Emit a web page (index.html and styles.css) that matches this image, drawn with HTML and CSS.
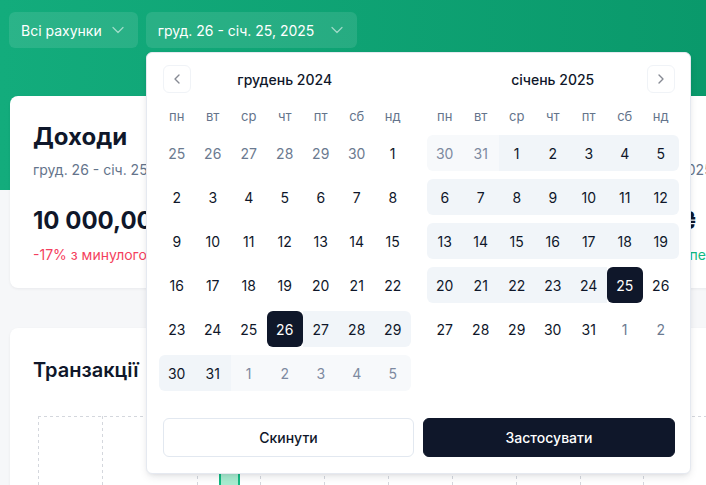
FILE: index.html
```html
<!DOCTYPE html>
<html lang="uk">
<head>
<meta charset="utf-8">
<title>Фінанси</title>
<link rel="stylesheet" href="styles.css">
</head>
<body>
<div class="page">
  <header class="toolbar">
    <button class="select">
      <span>Всі рахунки</span>
      <svg class="chev" viewBox="0 0 24 24"><path d="m6 9 6 6 6-6"/></svg>
    </button>
    <div class="date-wrap">
      <button class="select select-date">
        <span>груд. 26 - січ. 25, 2025</span>
        <svg class="chev" viewBox="0 0 24 24"><path d="m6 9 6 6 6-6"/></svg>
      </button>
      <div class="popover">
        <div class="months">
          <div class="month">
            <div class="month-head">
              <button class="nav"><svg viewBox="0 0 24 24"><path d="m15 18-6-6 6-6"/></svg></button>
              <span class="month-title">грудень 2024</span>
              <span></span>
            </div>
            <div class="weekdays"><span>пн</span><span>вт</span><span>ср</span><span>чт</span><span>пт</span><span>сб</span><span>нд</span></div>
            <div class="days">
              <span class="day out">25</span><span class="day out">26</span><span class="day out">27</span><span class="day out">28</span><span class="day out">29</span><span class="day out">30</span><span class="day">1</span>
              <span class="day">2</span><span class="day">3</span><span class="day">4</span><span class="day">5</span><span class="day">6</span><span class="day">7</span><span class="day">8</span>
              <span class="day">9</span><span class="day">10</span><span class="day">11</span><span class="day">12</span><span class="day">13</span><span class="day">14</span><span class="day">15</span>
              <span class="day">16</span><span class="day">17</span><span class="day">18</span><span class="day">19</span><span class="day">20</span><span class="day">21</span><span class="day">22</span>
              <span class="day">23</span><span class="day">24</span><span class="day">25</span><span class="day sel">26</span><span class="day range">27</span><span class="day range">28</span><span class="day range re">29</span>
              <span class="day range rs">30</span><span class="day range">31</span><span class="day range out">1</span><span class="day range out">2</span><span class="day range out">3</span><span class="day range out">4</span><span class="day range out re">5</span>
            </div>
          </div>
          <div class="month">
            <div class="month-head">
              <span></span>
              <span class="month-title">січень 2025</span>
              <button class="nav"><svg viewBox="0 0 24 24"><path d="m9 18 6-6-6-6"/></svg></button>
            </div>
            <div class="weekdays"><span>пн</span><span>вт</span><span>ср</span><span>чт</span><span>пт</span><span>сб</span><span>нд</span></div>
            <div class="days">
              <span class="day range out rs">30</span><span class="day range out">31</span><span class="day range">1</span><span class="day range">2</span><span class="day range">3</span><span class="day range">4</span><span class="day range re">5</span>
              <span class="day range rs">6</span><span class="day range">7</span><span class="day range">8</span><span class="day range">9</span><span class="day range">10</span><span class="day range">11</span><span class="day range re">12</span>
              <span class="day range rs">13</span><span class="day range">14</span><span class="day range">15</span><span class="day range">16</span><span class="day range">17</span><span class="day range">18</span><span class="day range re">19</span>
              <span class="day range rs">20</span><span class="day range">21</span><span class="day range">22</span><span class="day range">23</span><span class="day range">24</span><span class="day sel">25</span><span class="day">26</span>
              <span class="day">27</span><span class="day">28</span><span class="day">29</span><span class="day">30</span><span class="day">31</span><span class="day out">1</span><span class="day out">2</span>
            </div>
          </div>
        </div>
        <div class="actions">
          <button class="btn btn-outline">Скинути</button>
          <button class="btn btn-primary">Застосувати</button>
        </div>
      </div>
    </div>
  </header>

  <main class="content">
    <section class="stats">
      <div class="card stat stat-income">
        <h3 class="stat-title">Доходи</h3>
        <p class="stat-period">груд. 26 - січ. 25, 2025</p>
        <p class="stat-amount">10 000,00 ₴</p>
        <p class="stat-delta down">-17% з минулого періоду</p>
      </div>
      <div class="card stat stat-expense">
        <h3 class="stat-title">Витрати</h3>
        <p class="stat-period">груд. 26 - січ. 25, 2025</p>
        <p class="stat-amount">12 450,00 ₴</p>
        <p class="stat-delta up">+12,5% з минулого періоду</p>
      </div>
    </section>

    <section class="card chart-card">
      <h2 class="chart-title">Транзакції</h2>
      <svg class="chart" width="965" height="200" viewBox="0 0 965 200">
        <g class="grid">
          <line x1="0" y1="0.5" x2="965" y2="0.5"/>
          <line x1="0.5" y1="0" x2="0.5" y2="200"/>
          <line x1="64.5" y1="0" x2="64.5" y2="200"/>
          <line x1="159.5" y1="0" x2="159.5" y2="200"/>
          <line x1="222.5" y1="0" x2="222.5" y2="200"/>
          <line x1="286.5" y1="0" x2="286.5" y2="200"/>
          <line x1="350.5" y1="0" x2="350.5" y2="200"/>
          <line x1="414.5" y1="0" x2="414.5" y2="200"/>
          <line x1="478.5" y1="0" x2="478.5" y2="200"/>
          <line x1="542.5" y1="0" x2="542.5" y2="200"/>
          <line x1="605.5" y1="0" x2="605.5" y2="200"/>
          <line x1="669.5" y1="0" x2="669.5" y2="200"/>
        </g>
        <rect class="bar" x="182" y="30" width="19" height="180" rx="4"/>
      </svg>
    </section>
  </main>
</div>
</body>
</html>
```

FILE: styles.css
```css
html, body {
  margin: 0;
  padding: 0;
  overflow: hidden;
}

body {
  font-family: Inter, "Noto Sans", "Liberation Sans", sans-serif;
  color: #0f172a;
}

.page {
  width: 706px;
  height: 485px;
  overflow: hidden;
  background:
    linear-gradient(90deg, #13ac7c, #0a996b) top left / 100% 190px no-repeat,
    #f6f7f9;
}

/* toolbar */
.toolbar {
  display: flex;
  gap: 8px;
  padding: 12px 9px 0;
  position: relative;
  z-index: 5;
}

.select {
  height: 36px;
  display: flex;
  align-items: center;
  gap: 6px;
  padding: 0 10px 0 12px;
  border: 0;
  border-radius: 6px;
  background: rgba(255, 255, 255, 0.1);
  color: #fff;
  font-family: inherit;
  font-size: 14px;
  font-weight: 400;
  cursor: pointer;
}

.select-date {
  width: 211px;
  justify-content: space-between;
}

.chev {
  width: 20px;
  height: 20px;
  fill: none;
  stroke: #fff;
  stroke-width: 1.5;
  stroke-linecap: round;
  stroke-linejoin: round;
  opacity: 0.55;
}

.date-wrap {
  position: relative;
}

/* popover */
.popover {
  position: absolute;
  top: calc(100% + 4px);
  left: 0;
  width: 545px;
  box-sizing: border-box;
  padding: 12px 11px 16px 12px;
  background: #fff;
  border: 1px solid #e5e9f0;
  border-radius: 6px;
  box-shadow: 0 4px 10px -2px rgba(15, 23, 42, 0.12), 0 2px 4px -2px rgba(15, 23, 42, 0.08);
}

.months {
  display: flex;
  gap: 16px;
}

.month {
  width: 252px;
}

.month-head {
  display: grid;
  grid-template-columns: 28px 1fr 28px;
  align-items: center;
  height: 28px;
  padding: 0 4px;
}

.month-title {
  text-align: center;
  font-size: 14px;
  font-weight: 500;
  color: #0f172a;
}

.nav {
  width: 28px;
  height: 28px;
  padding: 0;
  display: flex;
  align-items: center;
  justify-content: center;
  background: #fff;
  border: 1px solid #e2e8f0;
  border-radius: 6px;
  opacity: 0.5;
}

.nav svg {
  width: 16px;
  height: 16px;
  fill: none;
  stroke: #0f172a;
  stroke-width: 2;
  stroke-linecap: round;
  stroke-linejoin: round;
}

.weekdays {
  display: grid;
  grid-template-columns: repeat(7, 36px);
  height: 22px;
  margin-top: 12px;
  align-items: center;
  justify-items: center;
  font-size: 13px;
  color: #64748b;
}

.days {
  display: grid;
  grid-template-columns: repeat(7, 36px);
  grid-auto-rows: 36px;
  row-gap: 8px;
  margin-top: 8px;
}

.day {
  display: flex;
  align-items: center;
  justify-content: center;
  font-size: 14px;
  color: #0f172a;
}

.day.out {
  color: #6b7a90;
}

.day.range {
  background: #f1f5f9;
}

.day.range.out {
  background: #f7f9fb;
  color: #7d8aa0;
}

.day.rs {
  border-radius: 6px 0 0 6px;
}

.day.re {
  border-radius: 0 6px 6px 0;
}

.day.sel {
  background: #0f172a;
  color: #fff;
  border-radius: 6px;
}

.actions {
  display: flex;
  gap: 9px;
  padding: 0 4px;
  margin-top: 27px;
}

.btn {
  flex: 1;
  height: 39px;
  border-radius: 6px;
  font-family: inherit;
  font-size: 14px;
  font-weight: 500;
  cursor: pointer;
}

.btn-outline {
  background: #fff;
  border: 1px solid #e2e8f0;
  color: #0f172a;
}

.btn-primary {
  background: #0f172a;
  border: 1px solid #0f172a;
  color: #fff;
}

/* content */
.content {
  width: 1016px;
  padding: 0 10px;
  margin-top: 48px;
}

.card {
  background: #fff;
  border-radius: 8px;
  box-shadow: 0 1px 3px rgba(15, 23, 42, 0.06);
}

.stats {
  display: flex;
  gap: 16px;
}

.stat {
  box-sizing: border-box;
  padding: 25px 23px 23px;
}

.stat-income {
  flex: 0 0 507px;
}

.stat-expense {
  flex: 1;
}

.stat-title {
  margin: 0;
  font-size: 24px;
  line-height: 32px;
  font-weight: 700;
  color: #0f172a;
}

.stat-period {
  margin: 7px 0 0;
  font-size: 14px;
  line-height: 20px;
  color: #64748b;
  white-space: nowrap;
}

.stat-amount {
  margin: 25px 0 0;
  font-size: 24px;
  line-height: 32px;
  font-weight: 700;
  color: #0f172a;
  white-space: nowrap;
}

.stat-delta {
  margin: 8px 0 0;
  font-size: 14px;
  line-height: 20px;
  white-space: nowrap;
}

.stat-delta.down {
  color: #f43f5e;
}

.stat-delta.up {
  color: #10b981;
}

.chart-card {
  margin-top: 40px;
  padding: 28px 23px;
  height: 400px;
}

.chart-title {
  margin: 0;
  font-size: 20px;
  line-height: 28px;
  font-weight: 600;
  color: #0f172a;
}

.chart {
  display: block;
  margin: 32px 0 0 5px;
}

.chart .grid line {
  stroke: #d4d7dd;
  stroke-width: 1;
  stroke-dasharray: 3 3;
}

.chart .bar {
  fill: #a7ebcf;
  stroke: #10b981;
  stroke-width: 2;
}
```
